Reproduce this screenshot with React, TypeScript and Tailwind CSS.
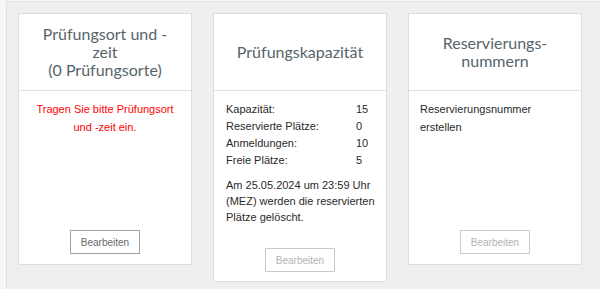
import React from "react";

const sans = { fontFamily: '"Liberation Sans", Arial, sans-serif' };
const title = { fontFamily: 'Lato, "Open Sans", sans-serif' };

function Btn({ active }: { active?: boolean }) {
  return (
    <div className="mt-auto flex justify-center">
      <div
        style={sans}
        className={
          "flex h-[24px] w-[70px] items-center justify-center border bg-white text-[10px] " +
          (active ? "border-[#a3a3a3] text-[#6a6a6a]" : "border-[#cacaca] text-[#b3b3b3]")
        }
      >
        Bearbeiten
      </div>
    </div>
  );
}

function Header({ children }: { children: React.ReactNode }) {
  return (
    <div
      style={title}
      className="flex h-[77px] items-center justify-center border-b border-[#e0e0e0] px-2 text-center text-[16px] leading-[18px] text-[#56646b]"
    >
      <div>{children}</div>
    </div>
  );
}

export default function App() {
  return (
    <div className="h-[289px] w-[600px] overflow-hidden bg-[#f7f7f7] pl-[6px] pt-[1px]">
      <div className="flex h-full items-start gap-[21px] border-l border-t border-[#e1e1e1] bg-[#efefef] pl-[11px] pt-[11px]">
        {/* Card 1 */}
        <div className="flex w-[174px] flex-col border border-[#dddddd] bg-white">
          <Header>
            Prüfungsort und -<br />
            zeit<br />
            (0 Prüfungsorte)
          </Header>
          <div className="flex min-h-[173px] flex-col px-3 pb-[10px] pt-[9px]">
            <p style={sans} className="text-center text-[11px] leading-[18px] text-[#ff0000]">
              Tragen Sie bitte Prüfungsort und -zeit ein.
            </p>
            <Btn active />
          </div>
        </div>

        {/* Card 2 */}
        <div className="flex w-[174px] flex-col border border-[#dddddd] bg-white">
          <Header>Prüfungskapazität</Header>
          <div style={sans} className="flex flex-col pb-[9px] pl-3 pr-[8px] pt-[10px] text-[11px] text-[#2a2a2a]">
            <div className="grid grid-cols-[130px_1fr] leading-[17px]">
              <span>Kapazität:</span>
              <span>15</span>
              <span>Reservierte Plätze:</span>
              <span>0</span>
              <span>Anmeldungen:</span>
              <span>10</span>
              <span>Freie Plätze:</span>
              <span>5</span>
            </div>
            <p className="mt-[8px] leading-[16px]">
              Am 25.05.2024 um 23:59 Uhr (MEZ) werden die reservierten Plätze gelöscht.
            </p>
            <div className="mt-[23px] pr-[4px]">
              <Btn />
            </div>
          </div>
        </div>

        {/* Card 3 */}
        <div className="flex w-[174px] flex-col border border-[#dddddd] bg-white">
          <Header>
            Reservierungs-<br />
            nummern
          </Header>
          <div className="flex min-h-[173px] flex-col px-[11px] pb-[10px] pt-[9px]">
            <p style={sans} className="w-[110px] text-[11px] leading-[18px] text-[#2a2a2a]">
              Reservierungsnummer erstellen
            </p>
            <Btn />
          </div>
        </div>
      </div>
    </div>
  );
}
